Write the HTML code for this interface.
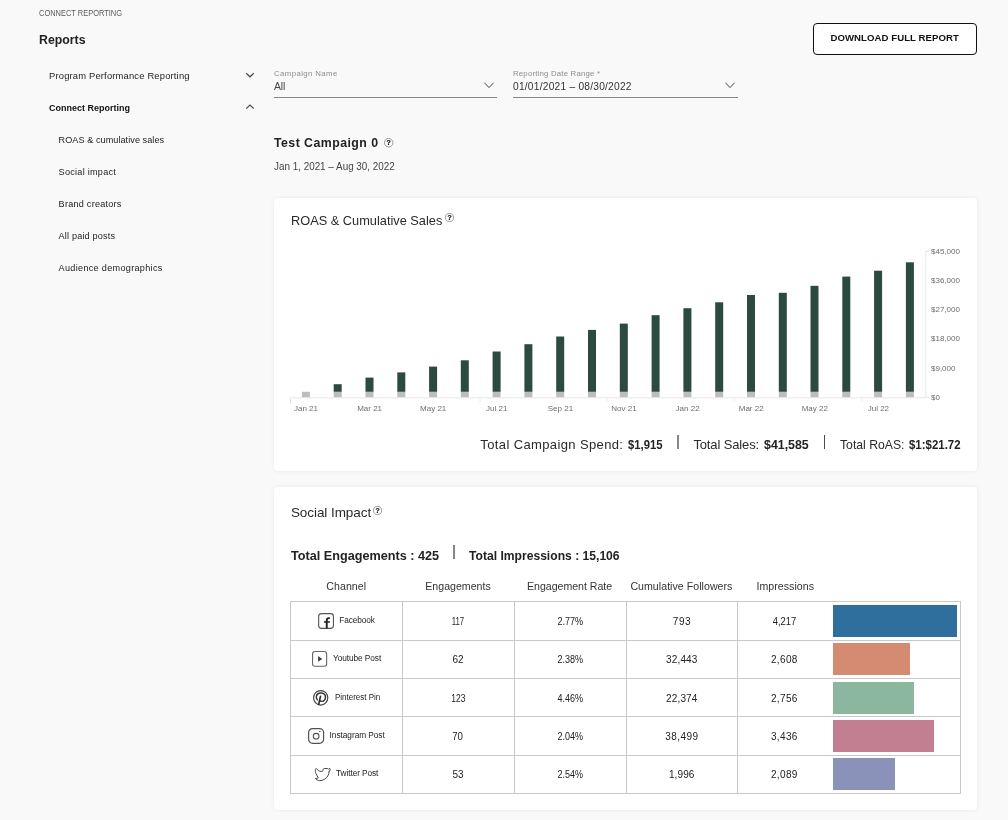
<!DOCTYPE html>
<html><head><meta charset="utf-8"><title>Connect Reporting</title>
<style>
*{box-sizing:border-box;margin:0;padding:0}
html,body{width:1008px;height:820px;overflow:hidden;background:#f9f9f9;font-family:"Liberation Sans",sans-serif;color:#1a1a1a}
.a{position:absolute;white-space:nowrap;line-height:1}
.card{position:absolute;background:#fff;border-radius:4px;box-shadow:0 0 4px rgba(0,0,0,.075)}
.ul{position:absolute;height:1px;background:#858585}
.vl{position:absolute;width:1px;background:#c9c9c9}
.hl{position:absolute;height:1px;background:#c9c9c9}
.bar{position:absolute;height:32px;left:833px}
.dv{position:absolute;width:1.5px;height:13.6px;background:#5a5a5a}
svg{position:absolute;overflow:visible}
#pg{position:absolute;left:0;top:0;width:1008px;height:820px;will-change:transform}
</style></head><body><div id="pg">

<!-- sidebar chevrons -->
<svg style="left:245px;top:71px" width="10" height="8" viewBox="0 0 10 8"><path d="M1.2 2.2 L5 5.8 L8.8 2.2" fill="none" stroke="#4a4a4a" stroke-width="1.25"/></svg>
<svg style="left:245px;top:103px" width="10" height="8" viewBox="0 0 10 8"><path d="M1.2 5.6 L5 2 L8.8 5.6" fill="none" stroke="#4a4a4a" stroke-width="1.25"/></svg>

<!-- dropdowns -->
<div class="ul" style="left:274px;top:97px;width:223px"></div>
<svg style="left:483.7px;top:82px" width="10" height="7" viewBox="0 0 10 7"><path d="M.5 .8 L5 5.6 L9.5 .8" fill="none" stroke="#444" stroke-width="1"/></svg>
<div class="ul" style="left:513px;top:97px;width:225px"></div>
<svg style="left:725px;top:82px" width="10" height="7" viewBox="0 0 10 7"><path d="M.5 .8 L5 5.6 L9.5 .8" fill="none" stroke="#444" stroke-width="1"/></svg>

<!-- button -->
<div class="a" style="left:813px;top:23px;width:164px;height:32px;border:1.4px solid #111;border-radius:4px;background:#fff"></div>

<!-- help icons -->
<svg style="left:384.3px;top:137.8px" width="9.4" height="9.4" viewBox="0 0 10 10"><circle cx="5" cy="5" r="4.5" fill="#fff" stroke="#8a8a8a" stroke-width=".95"/><text x="5" y="7.65" font-size="7.6" font-weight="bold" text-anchor="middle" fill="#111" stroke="#111" stroke-width=".25" font-family="Liberation Sans, sans-serif">?</text></svg>

<div class="card" style="left:274px;top:198px;width:703px;height:273px"></div>
<svg style="left:445.0px;top:212.9px" width="9" height="9" viewBox="0 0 10 10"><circle cx="5" cy="5" r="4.5" fill="#fff" stroke="#8a8a8a" stroke-width=".95"/><text x="5" y="7.65" font-size="7.6" font-weight="bold" text-anchor="middle" fill="#111" stroke="#111" stroke-width=".25" font-family="Liberation Sans, sans-serif">?</text></svg>
<svg style="position:absolute;left:0;top:0" width="1008" height="820" font-family="Liberation Sans, sans-serif"><rect x="301.9" y="391.8" width="8" height="5.6" fill="#bdbdbd"/>
<rect x="333.7" y="384.2" width="8" height="7.7" fill="#2c4a3e"/>
<rect x="333.7" y="391.8" width="8" height="5.6" fill="#bdbdbd"/>
<rect x="365.5" y="377.6" width="8" height="14.3" fill="#2c4a3e"/>
<rect x="365.5" y="391.8" width="8" height="5.6" fill="#bdbdbd"/>
<rect x="397.3" y="372.4" width="8" height="19.5" fill="#2c4a3e"/>
<rect x="397.3" y="391.8" width="8" height="5.6" fill="#bdbdbd"/>
<rect x="429.1" y="366.6" width="8" height="25.3" fill="#2c4a3e"/>
<rect x="429.1" y="391.8" width="8" height="5.6" fill="#bdbdbd"/>
<rect x="460.8" y="360.3" width="8" height="31.6" fill="#2c4a3e"/>
<rect x="460.8" y="391.8" width="8" height="5.6" fill="#bdbdbd"/>
<rect x="492.6" y="351.5" width="8" height="40.4" fill="#2c4a3e"/>
<rect x="492.6" y="391.8" width="8" height="5.6" fill="#bdbdbd"/>
<rect x="524.4" y="344.2" width="8" height="47.7" fill="#2c4a3e"/>
<rect x="524.4" y="391.8" width="8" height="5.6" fill="#bdbdbd"/>
<rect x="556.2" y="336.5" width="8" height="55.4" fill="#2c4a3e"/>
<rect x="556.2" y="391.8" width="8" height="5.6" fill="#bdbdbd"/>
<rect x="588.0" y="329.9" width="8" height="62.0" fill="#2c4a3e"/>
<rect x="588.0" y="391.8" width="8" height="5.6" fill="#bdbdbd"/>
<rect x="619.8" y="323.6" width="8" height="68.3" fill="#2c4a3e"/>
<rect x="619.8" y="391.8" width="8" height="5.6" fill="#bdbdbd"/>
<rect x="651.6" y="315.2" width="8" height="76.7" fill="#2c4a3e"/>
<rect x="651.6" y="391.8" width="8" height="5.6" fill="#bdbdbd"/>
<rect x="683.4" y="308.2" width="8" height="83.7" fill="#2c4a3e"/>
<rect x="683.4" y="391.8" width="8" height="5.6" fill="#bdbdbd"/>
<rect x="715.2" y="302.3" width="8" height="89.6" fill="#2c4a3e"/>
<rect x="715.2" y="391.8" width="8" height="5.6" fill="#bdbdbd"/>
<rect x="747.0" y="295.0" width="8" height="96.9" fill="#2c4a3e"/>
<rect x="747.0" y="391.8" width="8" height="5.6" fill="#bdbdbd"/>
<rect x="778.8" y="292.8" width="8" height="99.1" fill="#2c4a3e"/>
<rect x="778.8" y="391.8" width="8" height="5.6" fill="#bdbdbd"/>
<rect x="810.5" y="285.8" width="8" height="106.1" fill="#2c4a3e"/>
<rect x="810.5" y="391.8" width="8" height="5.6" fill="#bdbdbd"/>
<rect x="842.3" y="276.6" width="8" height="115.3" fill="#2c4a3e"/>
<rect x="842.3" y="391.8" width="8" height="5.6" fill="#bdbdbd"/>
<rect x="874.1" y="270.7" width="8" height="121.2" fill="#2c4a3e"/>
<rect x="874.1" y="391.8" width="8" height="5.6" fill="#bdbdbd"/>
<rect x="905.9" y="262.3" width="8" height="129.6" fill="#2c4a3e"/>
<rect x="905.9" y="391.8" width="8" height="5.6" fill="#bdbdbd"/>
<text x="306.0" y="411" font-size="8" fill="#6e6e6e" text-anchor="middle">Jan 21</text>
<text x="369.6" y="411" font-size="8" fill="#6e6e6e" text-anchor="middle">Mar 21</text>
<text x="433.2" y="411" font-size="8" fill="#6e6e6e" text-anchor="middle">May 21</text>
<text x="496.8" y="411" font-size="8" fill="#6e6e6e" text-anchor="middle">Jul 21</text>
<text x="560.4" y="411" font-size="8" fill="#6e6e6e" text-anchor="middle">Sep 21</text>
<text x="624.0" y="411" font-size="8" fill="#6e6e6e" text-anchor="middle">Nov 21</text>
<text x="687.6" y="411" font-size="8" fill="#6e6e6e" text-anchor="middle">Jan 22</text>
<text x="751.2" y="411" font-size="8" fill="#6e6e6e" text-anchor="middle">Mar 22</text>
<text x="814.8" y="411" font-size="8" fill="#6e6e6e" text-anchor="middle">May 22</text>
<text x="878.4" y="411" font-size="8" fill="#6e6e6e" text-anchor="middle">Jul 22</text>
<line x1="290.5" y1="398" x2="290.5" y2="403.5" stroke="#e2e2e2" stroke-width="1"/>
<line x1="480.0" y1="398" x2="480.0" y2="402" stroke="#efefef" stroke-width="1"/>
<line x1="607.2" y1="398" x2="607.2" y2="402" stroke="#efefef" stroke-width="1"/>
<line x1="734.4" y1="398" x2="734.4" y2="402" stroke="#efefef" stroke-width="1"/>
<line x1="861.6" y1="398" x2="861.6" y2="402" stroke="#efefef" stroke-width="1"/>
<line x1="290" y1="397.8" x2="926" y2="397.8" stroke="#e6e6e6" stroke-width="1"/>
<line x1="925.8" y1="251" x2="925.8" y2="398" stroke="#e8e8e8" stroke-width="1"/>
<line x1="925.8" y1="397.3" x2="929" y2="397.3" stroke="#e6e6e6" stroke-width="1"/>
<text x="931" y="399.8" font-size="8" fill="#6e6e6e">$0</text>
<text x="931" y="370.6" font-size="8" fill="#6e6e6e">$9,000</text>
<text x="931" y="341.4" font-size="8" fill="#6e6e6e">$18,000</text>
<text x="931" y="312.2" font-size="8" fill="#6e6e6e">$27,000</text>
<text x="931" y="283.0" font-size="8" fill="#6e6e6e">$36,000</text>
<line x1="925.8" y1="251.3" x2="929" y2="251.3" stroke="#e6e6e6" stroke-width="1"/>
<text x="931" y="253.8" font-size="8" fill="#6e6e6e">$45,000</text></svg>
<div class="dv" style="left:677px;top:435.2px;width:2px;background:#868686"></div>
<div class="dv" style="left:823.8px;top:435.2px;width:1.4px;background:#4a4a4a"></div>

<div class="card" style="left:274px;top:487.3px;width:703px;height:322.7px"></div>
<svg style="left:373.1px;top:505.8px" width="9" height="9" viewBox="0 0 10 10"><circle cx="5" cy="5" r="4.5" fill="#fff" stroke="#8a8a8a" stroke-width=".95"/><text x="5" y="7.65" font-size="7.6" font-weight="bold" text-anchor="middle" fill="#111" stroke="#111" stroke-width=".25" font-family="Liberation Sans, sans-serif">?</text></svg>
<div class="dv" style="left:453px;top:545.2px;width:2px;background:#868686"></div>

<!-- table grid -->
<div class="hl" style="left:290px;top:601px;width:671px"></div>
<div class="hl" style="left:290px;top:640px;width:671px"></div>
<div class="hl" style="left:290px;top:678px;width:671px"></div>
<div class="hl" style="left:290px;top:716px;width:671px"></div>
<div class="hl" style="left:290px;top:755px;width:671px"></div>
<div class="hl" style="left:290px;top:793px;width:671px"></div>
<div class="vl" style="left:290px;top:601px;height:193px"></div>
<div class="vl" style="left:402px;top:601px;height:193px"></div>
<div class="vl" style="left:514px;top:601px;height:193px"></div>
<div class="vl" style="left:626px;top:601px;height:193px"></div>
<div class="vl" style="left:737px;top:601px;height:193px"></div>
<div class="vl" style="left:960px;top:601px;height:193px"></div>

<div class="bar" style="top:605px;width:124px;background:#2f6f9d"></div>
<div class="bar" style="top:643px;width:77px;background:#d58a72"></div>
<div class="bar" style="top:682px;width:81px;background:#8ab79d"></div>
<div class="bar" style="top:720px;width:101px;background:#c27f92"></div>
<div class="bar" style="top:758px;width:62px;background:#8b92ba"></div>

<!-- channel icons -->
<svg style="left:318.1px;top:613.1px" width="16.1" height="16" viewBox="0 0 16 16"><rect x=".6" y=".6" width="14.8" height="14.8" rx="2.9" fill="none" stroke="#555" stroke-width="1.1"/><path d="M11.8 5.1 h-.9 c-1.3 0 -2.2 .8 -2.2 2.3 V15.4" fill="none" stroke="#222" stroke-width="1.9"/><path d="M5.9 9 h5.9" fill="none" stroke="#222" stroke-width="1.5"/></svg>
<svg style="left:312px;top:651.1px" width="15.2" height="15.8" viewBox="0 0 15.2 15.8"><rect x=".55" y=".55" width="14.1" height="14.7" rx="2.4" fill="none" stroke="#666" stroke-width="1.1"/><path d="M6.1 5 L10.2 7.9 L6.1 10.8 Z" fill="#3a3a3a"/></svg>
<svg style="left:313px;top:690px" width="15.4" height="15.7" viewBox="0 0 15.4 15.7"><ellipse cx="7.7" cy="7.85" rx="7.1" ry="7.25" fill="none" stroke="#444" stroke-width="1.15"/><path d="M4.4 9.7 C3.3 8.7 3 7.2 3.5 5.8 C4.2 3.9 6 2.9 8.1 3 C10.8 3.1 12.6 4.9 12.5 7.3 C12.4 9.8 10.7 11.5 8.7 11.4 C7.9 11.4 7.3 11 6.9 10.4" fill="none" stroke="#333" stroke-width="1.45" stroke-linecap="round"/><path d="M7.5 6.3 L5.7 14.4" fill="none" stroke="#2a2a2a" stroke-width="1.6" stroke-linecap="round"/></svg>
<svg style="left:308.1px;top:728.1px" width="16.2" height="15.9" viewBox="0 0 16.2 15.9"><rect x=".6" y=".6" width="15" height="14.7" rx="4" fill="none" stroke="#505050" stroke-width="1.2"/><circle cx="8.15" cy="8.2" r="2.85" fill="none" stroke="#505050" stroke-width="1.1"/><ellipse cx="11.9" cy="3.5" rx=".85" ry=".55" fill="#333"/></svg>
<svg style="left:314.9px;top:767.9px" width="15.4" height="13" viewBox="0 0 15.4 13"><path d="M1.2 .5 C2.6 2.2 4.4 3.4 6.2 3.6 C7.2 3.6 7.7 3.3 7.8 2.8 C7.7 1.4 8.6 .5 9.8 .5 H12.3 C12.8 .5 13.1 .8 13.4 1.2 C13.9 1 14.4 .7 14.9 .4 C15.2 1.2 15.2 2 15 2.7 L14.1 3 C14 5 13.6 6.6 12.9 7.8 C12 9.5 10.8 10.6 9.3 11.4 C7.8 12.2 6.2 12.7 4.6 12.7 C2.9 12.6 1.4 11.8 .3 10.5 C1.5 10.5 2.5 10.3 3.4 9.7 C2.4 8.7 1.8 7.5 1.4 6.2 C1 5.6 .7 5.1 .6 4.6 C.3 3.8 .3 3 .4 2.2 C.5 1.5 .8 1 1.2 .5 Z" fill="none" stroke="#444" stroke-width="1" stroke-linejoin="round"/></svg>

<div class="a" style="left:38.50px;top:10px;font-size:8.2px;color:#5a5a5a;transform:scaleX(0.9107);transform-origin:0 50%">CONNECT REPORTING</div>
<div class="a" style="left:38.50px;top:33px;font-size:13.4px;color:#222;font-weight:bold;transform:scaleX(0.9188);transform-origin:0 50%">Reports</div>
<div class="a" style="left:49.00px;top:71px;font-size:9.4px;color:#222;letter-spacing:0.179px">Program Performance Reporting</div>
<div class="a" style="left:49.00px;top:103px;font-size:9.4px;color:#111;font-weight:bold;transform:scaleX(0.9600);transform-origin:0 50%">Connect Reporting</div>
<div class="a" style="left:58.60px;top:136px;font-size:9.1px;color:#222;letter-spacing:0.062px">ROAS &amp; cumulative sales</div>
<div class="a" style="left:58.60px;top:168px;font-size:9.1px;color:#222;letter-spacing:0.259px">Social impact</div>
<div class="a" style="left:58.60px;top:200px;font-size:9.1px;color:#222;letter-spacing:0.242px">Brand creators</div>
<div class="a" style="left:58.60px;top:232px;font-size:9.1px;color:#222;letter-spacing:0.177px">All paid posts</div>
<div class="a" style="left:58.60px;top:264px;font-size:9.1px;color:#222;letter-spacing:0.306px">Audience demographics</div>
<div class="a" style="left:274.00px;top:70px;font-size:7.8px;color:#8c8c8c;letter-spacing:0.399px">Campaign Name</div>
<div class="a" style="left:274.00px;top:82px;font-size:10.4px;color:#444;letter-spacing:-0.131px">All</div>
<div class="a" style="left:513.00px;top:70px;font-size:7.8px;color:#8c8c8c;letter-spacing:0.200px">Reporting Date Range *</div>
<div class="a" style="left:513.00px;top:82px;font-size:10.2px;color:#333;letter-spacing:0.236px">01/01/2021 – 08/30/2022</div>
<div class="a" style="left:830.50px;top:33px;font-size:9.6px;color:#111;letter-spacing:0.058px;font-weight:bold">DOWNLOAD FULL REPORT</div>
<div class="a" style="left:274.00px;top:137px;font-size:12.3px;color:#222;letter-spacing:0.464px;font-weight:bold">Test Campaign 0</div>
<div class="a" style="left:274.00px;top:162px;font-size:10.4px;color:#444;transform:scaleX(0.9504);transform-origin:0 50%">Jan 1, 2021 – Aug 30, 2022</div>
<div class="a" style="left:290.90px;top:214px;font-size:13.5px;color:#2a2a2a;transform:scaleX(0.9467);transform-origin:0 50%">ROAS &amp; Cumulative Sales</div>
<div class="a" style="left:480.30px;top:438px;font-size:13px;color:#2a2a2a;letter-spacing:0.377px">Total Campaign Spend:</div>
<div class="a" style="left:627.90px;top:438px;font-size:13px;color:#222;font-weight:bold;transform:scaleX(0.8676);transform-origin:0 50%">$1,915</div>
<div class="a" style="left:693.40px;top:438px;font-size:13px;color:#2a2a2a;letter-spacing:-0.128px">Total Sales:</div>
<div class="a" style="left:763.80px;top:438px;font-size:13px;color:#222;font-weight:bold;transform:scaleX(0.9511);transform-origin:0 50%">$41,585</div>
<div class="a" style="left:840.20px;top:438px;font-size:13px;color:#2a2a2a;transform:scaleX(0.9395);transform-origin:0 50%">Total RoAS:</div>
<div class="a" style="left:909.00px;top:438px;font-size:13px;color:#222;font-weight:bold;transform:scaleX(0.8811);transform-origin:0 50%">$1:$21.72</div>
<div class="a" style="left:290.90px;top:506px;font-size:13.5px;color:#2a2a2a;letter-spacing:-0.062px">Social Impact</div>
<div class="a" style="left:290.90px;top:549px;font-size:13px;color:#222;font-weight:bold;transform:scaleX(0.9725);transform-origin:0 50%">Total Engagements : 425</div>
<div class="a" style="left:469.30px;top:549px;font-size:13px;color:#222;font-weight:bold;transform:scaleX(0.9319);transform-origin:0 50%">Total Impressions : 15,106</div>
<div class="a" style="left:326.20px;top:581px;font-size:10.6px;color:#333;letter-spacing:0.089px">Channel</div>
<div class="a" style="left:425.25px;top:581px;font-size:10.6px;color:#333;letter-spacing:0.013px">Engagements</div>
<div class="a" style="left:527.00px;top:581px;font-size:10.6px;color:#333;letter-spacing:-0.015px">Engagement Rate</div>
<div class="a" style="left:630.40px;top:581px;font-size:10.6px;color:#333;letter-spacing:0.039px">Cumulative Followers</div>
<div class="a" style="left:756.45px;top:581px;font-size:10.6px;color:#333;letter-spacing:0.039px">Impressions</div>
<div class="a" style="left:339.30px;top:616px;font-size:8.3px;color:#222;letter-spacing:-0.105px">Facebook</div>
<div class="a" style="left:450.02px;top:617px;font-size:10px;color:#222;transform:scaleX(0.7800);transform-origin:50% 50%">117</div>
<div class="a" style="left:555.82px;top:617px;font-size:10px;color:#222;transform:scaleX(0.8992);transform-origin:50% 50%">2.77%</div>
<div class="a" style="left:672.85px;top:617px;font-size:10px;color:#222;letter-spacing:0.506px">793</div>
<div class="a" style="left:771.68px;top:617px;font-size:10px;color:#222;transform:scaleX(0.9428);transform-origin:50% 50%">4,217</div>
<div class="a" style="left:333.10px;top:654px;font-size:8.3px;color:#222;letter-spacing:-0.088px">Youtube Post</div>
<div class="a" style="left:452.55px;top:655px;font-size:10px;color:#222;letter-spacing:-0.225px">62</div>
<div class="a" style="left:555.82px;top:655px;font-size:10px;color:#222;transform:scaleX(0.8992);transform-origin:50% 50%">2.38%</div>
<div class="a" style="left:665.95px;top:655px;font-size:10px;color:#222;letter-spacing:0.181px">32,443</div>
<div class="a" style="left:770.95px;top:655px;font-size:10px;color:#222;letter-spacing:0.367px">2,608</div>
<div class="a" style="left:334.80px;top:693px;font-size:8.3px;color:#222;transform:scaleX(0.9607);transform-origin:0 50%">Pinterest Pin</div>
<div class="a" style="left:449.66px;top:694px;font-size:10px;color:#222;transform:scaleX(0.8509);transform-origin:50% 50%">123</div>
<div class="a" style="left:555.82px;top:694px;font-size:10px;color:#222;transform:scaleX(0.8992);transform-origin:50% 50%">4.46%</div>
<div class="a" style="left:665.95px;top:694px;font-size:10px;color:#222;letter-spacing:0.181px">22,374</div>
<div class="a" style="left:770.95px;top:694px;font-size:10px;color:#222;letter-spacing:0.367px">2,756</div>
<div class="a" style="left:329.60px;top:731px;font-size:8.3px;color:#222;letter-spacing:-0.047px">Instagram Post</div>
<div class="a" style="left:452.44px;top:732px;font-size:10px;color:#222;transform:scaleX(0.9618);transform-origin:50% 50%">70</div>
<div class="a" style="left:555.82px;top:732px;font-size:10px;color:#222;transform:scaleX(0.8992);transform-origin:50% 50%">2.04%</div>
<div class="a" style="left:665.35px;top:732px;font-size:10px;color:#222;letter-spacing:0.421px">38,499</div>
<div class="a" style="left:770.95px;top:732px;font-size:10px;color:#222;letter-spacing:0.367px">3,436</div>
<div class="a" style="left:336.00px;top:769px;font-size:8.3px;color:#222;letter-spacing:-0.086px">Twitter Post</div>
<div class="a" style="left:452.55px;top:770px;font-size:10px;color:#222;letter-spacing:-0.225px">53</div>
<div class="a" style="left:555.82px;top:770px;font-size:10px;color:#222;transform:scaleX(0.8992);transform-origin:50% 50%">2.54%</div>
<div class="a" style="left:668.95px;top:770px;font-size:10px;color:#222;letter-spacing:0.117px">1,996</div>
<div class="a" style="left:770.95px;top:770px;font-size:10px;color:#222;letter-spacing:0.367px">2,089</div>
</div></body></html>
